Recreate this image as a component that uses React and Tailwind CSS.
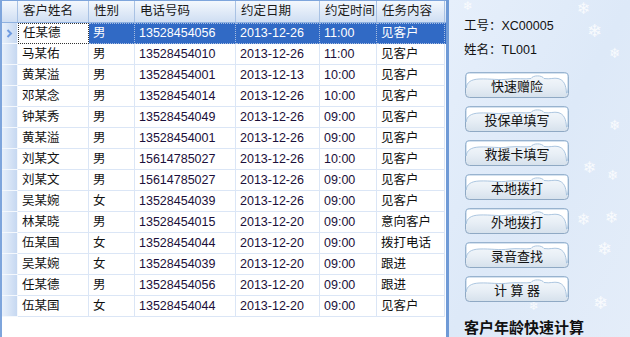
import React from 'react'

const rows = [
  ['任某德', '男', '13528454056', '2013-12-26', '11:00', '见客户'],
  ['马某佑', '男', '13528454010', '2013-12-26', '11:00', '见客户'],
  ['黄某溢', '男', '13528454001', '2013-12-13', '10:00', '见客户'],
  ['邓某念', '男', '13528454014', '2013-12-26', '10:00', '见客户'],
  ['钟某秀', '男', '13528454049', '2013-12-26', '09:00', '见客户'],
  ['黄某溢', '男', '13528454001', '2013-12-26', '09:00', '见客户'],
  ['刘某文', '男', '15614785027', '2013-12-26', '10:00', '见客户'],
  ['刘某文', '男', '15614785027', '2013-12-26', '09:00', '见客户'],
  ['吴某婉', '女', '13528454039', '2013-12-26', '09:00', '见客户'],
  ['林某晓', '男', '13528454015', '2013-12-20', '09:00', '意向客户'],
  ['伍某国', '女', '13528454044', '2013-12-20', '09:00', '拨打电话'],
  ['吴某婉', '女', '13528454039', '2013-12-20', '09:00', '跟进'],
  ['任某德', '男', '13528454056', '2013-12-20', '09:00', '跟进'],
  ['伍某国', '女', '13528454044', '2013-12-20', '09:00', '见客户'],
]

const headers = ['客户姓名', '性别', '电话号码', '约定日期', '约定时间', '任务内容']
const widths = ['w-[71px]', 'w-[46px]', 'w-[101px]', 'w-[84px]', 'w-[57px]', 'w-[68px]']

const buttons = ['快速赠险', '投保单填写', '救援卡填写', '本地拨打', '外地拨打', '录音查找', '计 算 器']

// snowflake positions inside the right panel
const flakes = [
  { x: 14, y: 0, s: 12 },
  { x: 128, y: 1, s: 16 },
  { x: 138, y: 22, s: 18 },
  { x: 160, y: 46, s: 14 },
  { x: 160, y: 118, s: 14 },
  { x: 134, y: 160, s: 16 },
  { x: 158, y: 168, s: 14 },
  { x: 128, y: 212, s: 16 },
  { x: 156, y: 210, s: 16 },
  { x: 148, y: 240, s: 18 },
  { x: 144, y: 294, s: 18 },
  { x: 80, y: 300, s: 12 },
]

function IceButton({ label }) {
  return (
    <div className="relative w-[104px] h-[26px] flex items-center justify-center">
      <svg className="absolute inset-0" width="104" height="26" viewBox="0 0 104 26">
        <defs>
          <linearGradient id="btnbg" x1="0" y1="0" x2="0" y2="1">
            <stop offset="0" stopColor="#f7fafd" />
            <stop offset="0.55" stopColor="#e8eff6" />
            <stop offset="1" stopColor="#d6e1ec" />
          </linearGradient>
        </defs>
        <rect x="0.5" y="0.5" width="103" height="25" rx="4" fill="url(#btnbg)" stroke="#8fa9c4" />
        <path
          d="M1,16 C2,10 6,7.5 14,7 C26,6.5 34,8.5 44,7 C52,6 60,7.5 66,6.5 C68,3 77,3 79,6.5 C85,7.5 89,5.5 93,6.5 C99,8 101,13 101.5,21 C102.5,22 103,18 103,14 L103,4 Q103,1 100,1 L4,1 Q1,1 1,4 Z"
          fill="#ffffff"
          stroke="#a3c0dc"
          strokeWidth="0.9"
        />
      </svg>
      <span className="relative mt-[3px] text-[13px] text-[#111]">{label}</span>
    </div>
  )
}

export default function App() {
  return (
    <div
      className="w-[630px] h-[337px] flex overflow-hidden bg-white text-[12.5px] text-[#111]"
      style={{ fontFamily: '"Liberation Sans", "Noto Sans CJK SC", sans-serif' }}
    >
      {/* grid */}
      <div className="w-[446px] h-full border-l-2 border-t border-[#7ea5dc] flex flex-col">
        <div className="flex h-[22px] border-b border-[#8fb1e0] bg-gradient-to-b from-[#f4f8fd] to-[#cfdef3]">
          <div className="w-[16px] border-r border-[#a9c2e4]" />
          {headers.map((h, i) => (
            <div key={h} className={`${widths[i]} border-r border-[#a9c2e4] flex items-center pl-[5px] text-[12.5px] text-[#1a1a1a]`}>
              {h}
            </div>
          ))}
        </div>
        {rows.map((r, ri) => {
          const sel = ri === 0
          return (
            <div key={ri} className={`flex h-[21px] ${sel ? 'bg-[#316ac5] text-white' : ''}`}>
              <div className="w-[16px] border-b border-r border-[#f4f8fd] bg-gradient-to-r from-[#e8f0fb] to-[#c6d8f1] flex items-center justify-center">
                {sel && (
                  <svg width="7" height="9" viewBox="0 0 7 9">
                    <path d="M1.5,1 L5,4.5 L1.5,8" fill="none" stroke="#6f9be0" strokeWidth="2" />
                  </svg>
                )}
              </div>
              {r.map((c, ci) => (
                <div
                  key={ci}
                  className={`${widths[ci]} flex items-center pl-[4px] ${
                    sel
                      ? ci === 0
                        ? 'bg-white text-[#111] border border-dotted border-[#333]'
                        : 'border-y border-r border-dotted border-[#a8bde0]'
                      : 'border-b border-r border-[#dbe6f6]'
                  } ${!sel && (ci === 2 || ci === 3 || ci === 4) ? 'text-[#1b0f3a]' : ''}`}
                >
                  {c}
                </div>
              ))}
            </div>
          )
        })}
        <div className="flex-1" />
      </div>

      {/* right panel */}
      <div className="relative flex-1 h-full border-l-[3px] border-[#6f9ad6] bg-gradient-to-br from-[#e6effb] via-[#dde9f8] to-[#e4edf9] pl-[15px] pt-[16px]">
        {flakes.map((f, i) => (
          <span
            key={i}
            className="absolute text-white opacity-80 leading-none"
            style={{ left: f.x, top: f.y, fontSize: f.s, fontFamily: '"DejaVu Sans", sans-serif' }}
          >
            ❄
          </span>
        ))}
        <div className="relative flex flex-col">
          <div className="h-[20px] flex items-center text-[12.5px]">工号：XC00005</div>
          <div className="h-[20px] mt-[4px] flex items-center text-[12.5px]">姓名：TL001</div>
          <div className="mt-[12px] flex flex-col gap-[8px] pl-[1px]">
            {buttons.map((b) => (
              <IceButton key={b} label={b} />
            ))}
          </div>
          <div className="mt-[15px] text-[15px] font-bold text-[#111]">客户年龄快速计算</div>
        </div>
      </div>
    </div>
  )
}
